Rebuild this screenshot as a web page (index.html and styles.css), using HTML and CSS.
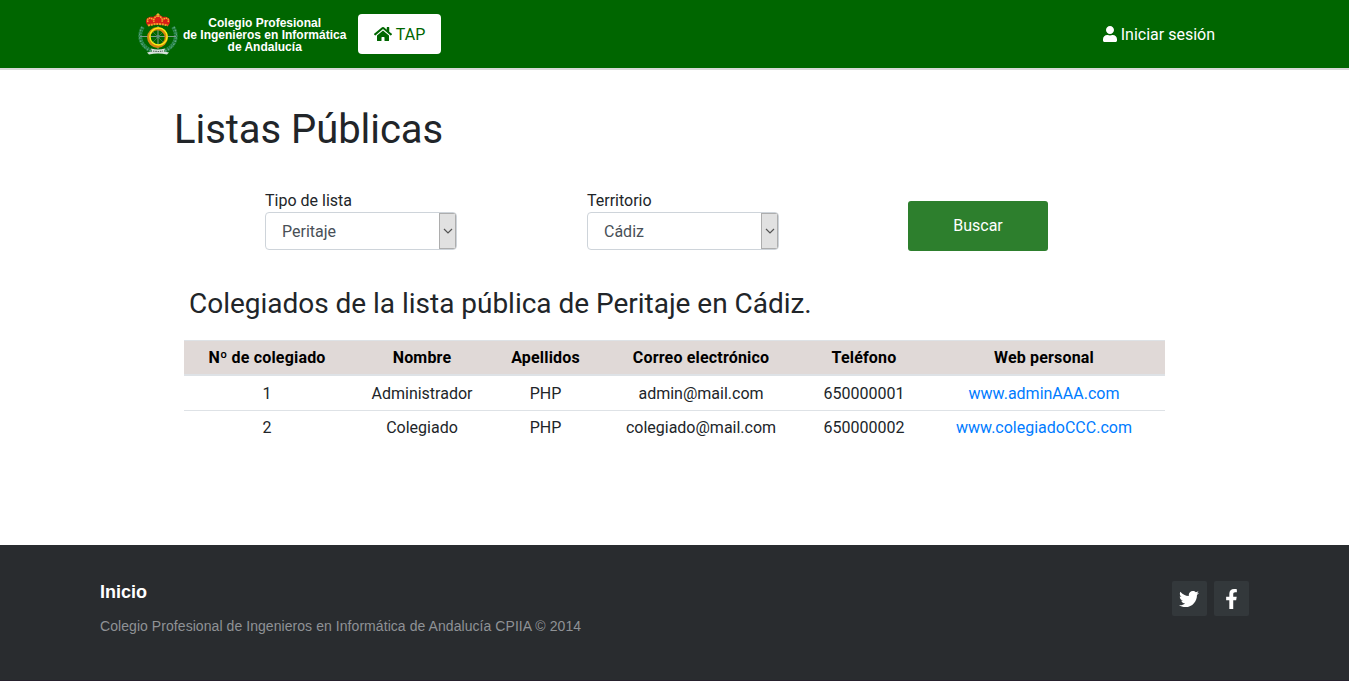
FILE: index.html
```html
<!DOCTYPE html>
<html lang="es">
<head>
<meta charset="utf-8">
<title>Listas Públicas</title>
<link rel="stylesheet" href="styles.css">
</head>
<body>
<header class="navbar">
  <a class="brand">
    <svg class="crest" viewBox="0 0 42 44" width="42" height="44">
      <g fill="none" stroke="#2f8a55" stroke-width="3.8" stroke-dasharray="2.2 .5">
        <path d="M6 14C0 23 4 34 15 38"/><path d="M36 14C42 23 38 34 27 38"/>
      </g>
      <g fill="none" stroke="#7fb99a" stroke-width=".8" stroke-dasharray="1.500 2">
        <path d="M5 14C-1 25 5 35 14 38"/><path d="M37 14C43 25 37 35 28 38"/>
      </g>
      <path d="M3 23.500h36M21 13v23" stroke="#7d9c8c" stroke-width="1"/>
      <path d="M14.500 17.500l13 13M27.500 17.500l-13 13" stroke="#3f7b52" stroke-width=".8"/>
      <circle cx="20.500" cy="24.500" r="8.800" fill="none" stroke="#d9860f" stroke-width="3.200"/>
      <circle cx="21.500" cy="23.500" r="8.600" fill="none" stroke="#f7ee16" stroke-width="1.500"/>
      <circle cx="21" cy="23.500" r="1.800" fill="#5f8f77"/>
      <path d="M11 13C6 7 11 3 16 4Q21-1 26 4c5-1 10 3 5 9Q21 10 11 13z" fill="#d91f16"/>
      <path d="M11 9c-2-4 3-5 5-2M31 9c2-4-3-5-5-2M17 9c-1-4 2-6 4-6s5 2 4 6" fill="none" stroke="#f1c232" stroke-width="1.300" stroke-dasharray="1.500 .6"/>
      <path d="M11 12.500q10-3 20 0" fill="none" stroke="#f0a12a" stroke-width="2" stroke-dasharray="2 .8"/>
      <path d="M21 0v4M19.500 1.500h3" stroke="#e9b63a" stroke-width="1"/>
      <path d="M14 35.500q7 2 14 0l-1 3 5 1-2 2q-9-2-18 0l-2-2 5-1z" fill="#d9e3dd"/>
      <path d="M16 38q5 1 10 0" fill="none" stroke="#566b5e" stroke-width="1.200" stroke-dasharray="1.500 .8"/>
    </svg>
    <span class="brand-name">Colegio Profesional<br>de Ingenieros en Informática<br>de Andalucía</span>
  </a>
  <a class="tap"><svg viewBox="0 0 576 512" width="18" height="16" fill="currentColor"><path d="M280.370 148.260L96 300.110V464a16 16 0 0 0 16 16l112.060-.290a16 16 0 0 0 15.920-16V368a16 16 0 0 1 16-16h64a16 16 0 0 1 16 16v95.640a16 16 0 0 0 16 16.050L464 480a16 16 0 0 0 16-16V300L295.670 148.260a12.190 12.190 0 0 0-15.300 0zM571.600 251.470L488 182.560V44.050a12 12 0 0 0-12-12h-56a12 12 0 0 0-12 12v72.610L318.470 43a48 48 0 0 0-61 0L4.340 251.470a12 12 0 0 0-1.600 16.900l25.500 31A12 12 0 0 0 45.150 301l235.220-193.740a12.190 12.190 0 0 1 15.300 0L530.900 301a12 12 0 0 0 16.900-1.600l25.500-31a12 12 0 0 0-1.700-16.930z"/></svg><span class="nav-text">TAP</span></a>
  <a class="login"><svg viewBox="0 0 448 512" width="14" height="16" fill="currentColor"><path d="M224 256c70.700 0 128-57.300 128-128S294.700 0 224 0 96 57.300 96 128s57.300 128 128 128zm89.600 32h-16.700c-22.200 10.200-46.900 16-72.900 16s-50.600-5.800-72.900-16h-16.700C60.200 288 0 348.200 0 422.400V464c0 26.500 21.500 48 48 48h352c26.500 0 48-21.500 48-48v-41.600c0-74.200-60.200-134.400-134.400-134.400z"/></svg><span class="nav-text">Iniciar sesión</span></a>
</header>

<main class="content">
  <h1 class="title">Listas Públicas</h1>
  <form class="filters">
    <div class="field">
      <span class="label">Tipo de lista</span>
      <div class="select"><span class="value">Peritaje</span><span class="arrow"><svg viewBox="0 0 10 6" width="10" height="6"><path d="M1 1l4 4 4-4"/></svg></span></div>
    </div>
    <div class="field">
      <span class="label">Territorio</span>
      <div class="select"><span class="value">Cádiz</span><span class="arrow"><svg viewBox="0 0 10 6" width="10" height="6"><path d="M1 1l4 4 4-4"/></svg></span></div>
    </div>
    <button class="search" type="button">Buscar</button>
  </form>
  <h2 class="subtitle">Colegiados de la lista pública de Peritaje en Cádiz.</h2>
  <table class="members">
    <colgroup><col class="c-num"><col class="c-name"><col class="c-last"><col class="c-mail"><col class="c-phone"><col class="c-web"></colgroup>
    <thead><tr><th>Nº de colegiado</th><th>Nombre</th><th>Apellidos</th><th>Correo electrónico</th><th>Teléfono</th><th>Web personal</th></tr></thead>
    <tbody>
      <tr><td>1</td><td>Administrador</td><td>PHP</td><td>admin@mail.com</td><td>650000001</td><td><a class="link">www.adminAAA.com</a></td></tr>
      <tr><td>2</td><td>Colegiado</td><td>PHP</td><td>colegiado@mail.com</td><td>650000002</td><td><a class="link">www.colegiadoCCC.com</a></td></tr>
    </tbody>
  </table>
</main>

<footer class="footer">
  <div>
    <p class="footer-link">Inicio</p>
    <p class="copyright">Colegio Profesional de Ingenieros en Informática de Andalucía CPIIA © 2014</p>
  </div>
  <div class="social">
    <a class="social-btn twitter"><svg viewBox="0 0 512 512" width="20" height="20" fill="currentColor"><path d="M459.370 151.716c.325 4.548.325 9.097.325 13.645 0 138.720-105.583 298.558-298.558 298.558-59.452 0-114.680-17.219-161.137-47.106 8.447.974 16.568 1.299 25.340 1.299 49.055 0 94.213-16.568 130.274-44.832-46.132-.975-84.792-31.188-98.112-72.772 6.498.974 12.995 1.624 19.818 1.624 9.421 0 18.843-1.300 27.614-3.573-48.081-9.747-84.143-51.980-84.143-102.985v-1.299c13.969 7.797 30.214 12.670 47.431 13.319-28.264-18.843-46.781-51.005-46.781-87.391 0-19.492 5.197-37.360 14.294-52.954 51.655 63.675 129.300 105.258 216.365 109.807-1.624-7.797-2.599-15.918-2.599-24.040 0-57.828 46.782-104.934 104.934-104.934 30.213 0 57.502 12.670 76.670 33.137 23.715-4.548 46.456-13.320 66.599-25.340-7.798 24.366-24.366 44.833-46.132 57.827 21.117-2.273 41.584-8.122 60.426-16.243-14.292 20.791-32.161 39.308-52.628 54.253z"/></svg></a>
    <a class="social-btn"><svg viewBox="0 0 320 512" width="13" height="20" fill="currentColor"><path d="M279.140 288l14.220-92.660h-88.910v-60.130c0-25.350 12.420-50.060 52.240-50.060h40.420V6.260S260.430 0 225.360 0c-73.220 0-121.080 44.380-121.080 124.720v70.620H22.890V288h81.390v224h100.170V288z"/></svg></a>
  </div>
</footer>
</body>
</html>
```
FILE: styles.css
```css
* { box-sizing: border-box; }
body {
  margin: 0;
  min-height: 681px;
  display: flex;
  flex-direction: column;
  font: 16px/24px Roboto, sans-serif;
  color: #212529;
  background: #fff;
}
svg { flex: none; }
h1, h2, p { margin: 0; font-weight: 400; }

.navbar {
  height: 70px;
  padding: 0 134px 0 137px;
  display: flex;
  align-items: center;
  color: #fff;
  background: #060;
  border-bottom: 2px solid #d8d8d8;
}
.brand { display: flex; align-items: center; gap: 4px; width: 221px; }
.crest { margin-top: 1px; }
.brand-name {
  font: bold 12px/12px "Liberation Sans", Arial, sans-serif;
  text-align: center;
  white-space: nowrap;
  padding-top: 2px;
}
.nav-text { padding-top: 2px; }
.tap {
  display: flex;
  align-items: center;
  justify-content: center;
  gap: 4px;
  width: 83px;
  height: 40px;
  color: #060;
  background: #fff;
  border-radius: 4px;
}
.login { margin-left: auto; display: flex; align-items: center; gap: 4px; }

.content { height: 475px; padding: 36px 184px 0 174px; }
.title { font-size: 40px; line-height: 48px; letter-spacing: -.05px; }
.filters { display: flex; margin: 35px 0 0 91px; }
.field { width: 192px; margin-right: 130px; }
.field + .field { margin-right: 129px; }
.label { display: block; line-height: 23px; }
.select {
  display: flex;
  justify-content: space-between;
  height: 38px;
  color: #495057;
  border: 1px solid #ced4da;
  border-radius: 4px;
  overflow: hidden;
}
.value { padding: 7px 16px 5px; }
.arrow {
  display: flex;
  align-items: center;
  justify-content: center;
  width: 17px;
  background: #e1e1e1;
  border: 1px solid #adadad;
}
.arrow path { fill: none; stroke: #555; stroke-width: 1.2; }
.search {
  width: 140px;
  height: 50px;
  margin-top: 12px;
  padding: 0;
  font: 16px/24px Roboto, sans-serif;
  color: #fff;
  background: #2d7f2d;
  border: 0;
  border-radius: 3px;
}
.subtitle { margin: 36px 0 0 15px; font-size: 28px; line-height: 34px; letter-spacing: -.02px; }

.members {
  width: 981px;
  margin: 19px 0 0 10px;
  table-layout: fixed;
  border-collapse: separate;
  border-spacing: 0;
  text-align: center;
}
.c-num { width: 166px; }
.c-name { width: 144px; }
.c-last { width: 103px; }
.c-mail { width: 208px; }
.c-phone { width: 118px; }
.c-web { width: 242px; }
.members th {
  height: 36px;
  padding: 0;
  font-weight: 700;
  letter-spacing: .18px;
  color: #000;
  background: #e0d9d7;
  border-top: 1px solid #dee2e6;
  border-bottom: 2px solid #dee2e6;
}
.members td { height: 34px; padding: 1px 0 0; }
.members tr + tr td { padding: 0; border-top: 1px solid #dee2e6; }
.link { color: #007bff; }

.footer {
  flex: 1;
  display: flex;
  justify-content: space-between;
  padding: 36px 100px 0;
  font-family: "Liberation Sans", Arial, sans-serif;
  background: #292c2f;
  border-bottom: 1px solid #26212d;
}
.footer-link { padding-top: 1px; font-size: 18px; line-height: 21px; font-weight: 700; color: #fff; }
.copyright { margin-top: 13px; font-size: 14px; line-height: 20px; letter-spacing: .062px; color: #8f9296; }
.social { display: flex; gap: 7px; }
.social-btn {
  display: flex;
  align-items: center;
  justify-content: center;
  width: 35px;
  height: 35px;
  color: #fff;
  background: #33383b;
  border-radius: 2px;
}
.twitter { padding-right: 2px; }
```
